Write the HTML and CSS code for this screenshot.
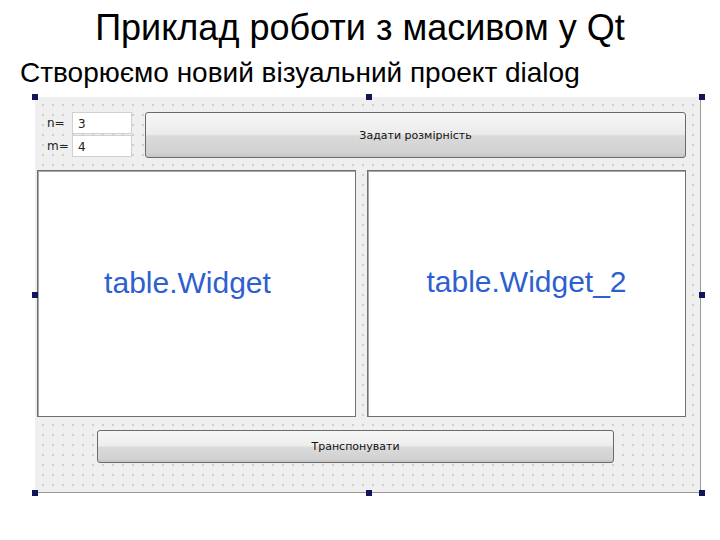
FILE: index.html
```html
<!DOCTYPE html>
<html>
<head>
<meta charset="utf-8">
<link rel="stylesheet" href="styles.css">
</head>
<body>
<h1 class="title">Приклад роботи з масивом у Qt</h1>
<p class="subtitle">Створюємо новий візуальний проект dialog</p>
<div class="form">
  <span class="handle h-tl"></span>
  <span class="handle h-tc"></span>
  <span class="handle h-tr"></span>
  <span class="handle h-ml"></span>
  <span class="handle h-mr"></span>
  <span class="handle h-bl"></span>
  <span class="handle h-bc"></span>
  <span class="handle h-br"></span>
  <div class="top-row">
    <div class="fields">
      <div class="field"><span class="lbl">n=</span><span class="edit">3</span></div>
      <div class="field"><span class="lbl">m=</span><span class="edit">4</span></div>
    </div>
    <div class="btn btn-size">Задати розмірність</div>
  </div>
  <div class="tables">
    <div class="table t1"><span class="tname">table.Widget</span></div>
    <div class="table t2"><span class="tname">table.Widget_2</span></div>
  </div>
  <div class="btn btn-trans">Транспонувати</div>
</div>
</body>
</html>
```
FILE: styles.css
```css
html, body {
  margin: 0;
  padding: 0;
  background: #ffffff;
}
body {
  width: 720px;
  height: 540px;
  overflow: hidden;
  font-family: "Liberation Sans", Arial, sans-serif;
  color: #000;
}
.title {
  margin: 0;
  padding-top: 6px;
  height: 44px;
  font-size: 36px;
  font-weight: normal;
  line-height: 44px;
  text-align: center;
}
.subtitle {
  margin: 0;
  padding-left: 20px;
  height: 44px;
  font-size: 28px;
  line-height: 46px;
}
.form {
  position: relative;
  margin-left: 35px;
  margin-top: 3px;
  width: 666px;
  height: 396px;
  box-sizing: border-box;
  border-right: 1px solid #9a9a9a;
  border-bottom: 1px solid #9a9a9a;
  background-color: #efefef;
  background-image: radial-gradient(circle, #c2c2c2 0.6px, transparent 1px);
  background-size: 10px 10px;
  background-position: 3px 3px;
  padding: 15px 0 0 2px;
}
.handle {
  position: absolute;
  width: 6px;
  height: 6px;
  background: #14145a;
}
.h-tl { left: -3px; top: -3px; }
.h-tc { left: 331px; top: -3px; }
.h-tr { left: 664px; top: -3px; }
.h-ml { left: -3px; top: 195px; }
.h-mr { left: 664px; top: 195px; }
.h-bl { left: -3px; top: 393px; }
.h-bc { left: 331px; top: 393px; }
.h-br { left: 664px; top: 393px; }
.top-row {
  display: flex;
  height: 46px;
  padding-left: 10px;
  width: 639px;
}
.fields {
  display: flex;
  flex-direction: column;
  gap: 1px;
}
.field {
  display: flex;
  align-items: center;
  height: 22px;
}
.lbl {
  width: 25px;
  font-family: "DejaVu Sans", sans-serif;
  font-size: 12px;
  color: #222;
}
.edit {
  width: 60px;
  height: 22px;
  box-sizing: border-box;
  background: #fff;
  border: 1px solid #d0d0d0;
  padding-left: 5px;
  font-family: "DejaVu Sans", sans-serif;
  font-size: 12px;
  line-height: 22px;
  color: #222;
}
.btn {
  box-sizing: border-box;
  border: 1px solid #6a6a6a;
  border-radius: 3px;
  background: linear-gradient(#f6f6f6 0%, #ececec 48%, #dadada 52%, #d2d2d2 90%, #c4c4c4 100%);
  display: flex;
  align-items: center;
  justify-content: center;
  font-family: "DejaVu Sans", sans-serif;
  font-size: 11px;
  color: #111;
}
.btn-size {
  margin-left: 13px;
  flex: 1;
  height: 46px;
}
.tables {
  display: flex;
  gap: 11px;
  margin-top: 12px;
  height: 247px;
}
.table {
  width: 319px;
  height: 247px;
  box-sizing: border-box;
  background: #fff;
  border: 1px solid #707070;
  box-shadow: inset 1px 1px 0 #a8a8a8;
  display: flex;
  justify-content: center;
  align-items: center;
}
.tname {
  font-family: "Liberation Sans", Arial, sans-serif;
  font-size: 30px;
  color: #2d5fd2;
}
.t1 .tname { margin-right: 18px; margin-top: -22px; }
.t2 .tname { margin-top: -24px; }
.btn-trans {
  margin-top: 13px;
  margin-left: 60px;
  width: 517px;
  height: 33px;
}
```
